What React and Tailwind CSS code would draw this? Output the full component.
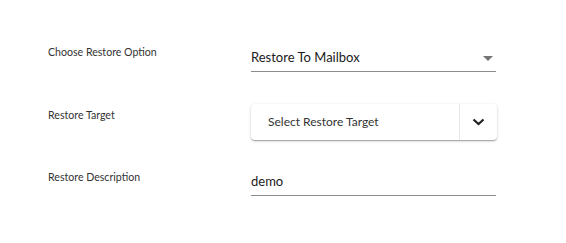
export default function App() {
  const font = { fontFamily: 'Lato, "Liberation Sans", sans-serif' };
  return (
    <div className="w-[566px] h-[243px] bg-white relative" style={font}>
      <div className="pt-[40px] pl-[48px] flex flex-col">
        <div className="flex h-[32px]">
          <div className="w-[203px] mt-[4px] text-[10.6px] leading-[16px] text-[#333333]">Choose Restore Option</div>
          <div className="w-[245px] h-[32px] border-b border-[#8c8c8c] flex items-center justify-between pt-[4px]">
            <span className="text-[13px] text-[#212121]">Restore To Mailbox</span>
            <svg width="10" height="5" viewBox="0 0 10 5" className="mr-[3px] mt-[1px]"><path d="M0 0 L10 0 L5 5 Z" fill="#757575" /></svg>
          </div>
        </div>
        <div className="flex h-[36px] mt-[32px]">
          <div className="w-[203px] mt-[3px] text-[10.6px] leading-[16px] text-[#333333]">Restore Target</div>
          <div className="w-[246px] h-[36px] bg-white rounded-[4px] flex items-stretch shadow-[0_1px_3px_rgba(0,0,0,0.2),0_1px_1px_rgba(0,0,0,0.14),0_2px_1px_-1px_rgba(0,0,0,0.12)]">
            <div className="flex-1 flex items-center pl-[17px] text-[12px] text-[#333333]">Select Restore Target</div>
            <div className="w-[38px] border-l border-[#e6e6e6] flex items-center justify-center">
              <svg width="13" height="8" viewBox="0 0 13 8"><path d="M1.5 1.5 L6.5 6 L11.5 1.5" stroke="#222" strokeWidth="2.2" fill="none" /></svg>
            </div>
          </div>
        </div>
        <div className="flex h-[32px] mt-[24px]">
          <div className="w-[203px] mt-[5px] text-[10.6px] leading-[16px] text-[#333333]">Restore Description</div>
          <div className="w-[245px] h-[32px] border-b border-[#8c8c8c] flex items-center pt-[4px]">
            <span className="text-[13px] text-[#212121]">demo</span>
          </div>
        </div>
      </div>
    </div>
  );
}
